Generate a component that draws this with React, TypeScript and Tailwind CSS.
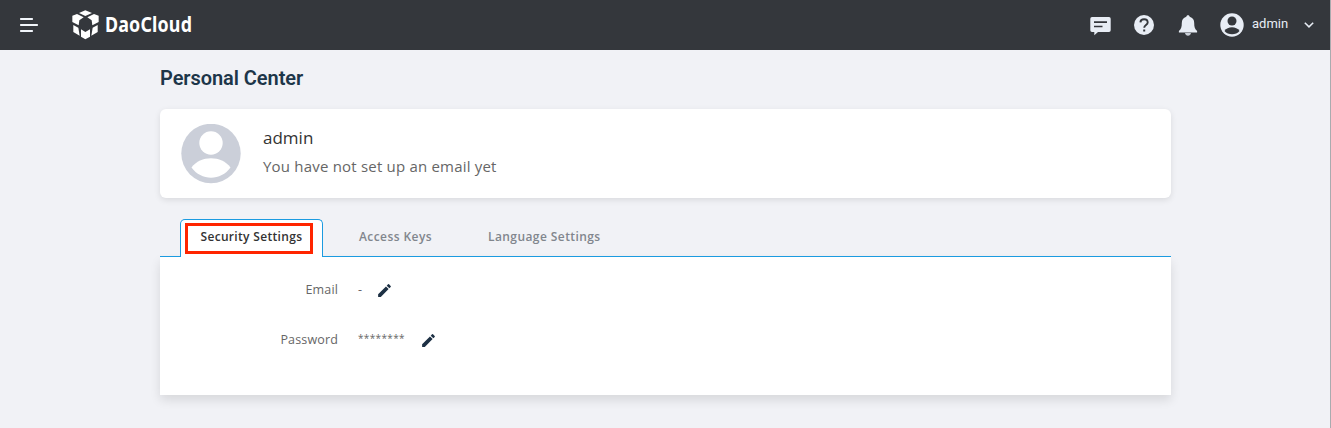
import React from 'react';
import { MdEdit } from 'react-icons/md';

function Logo() {
  return (
    <svg className="h-[30px] w-[27px] shrink-0" viewBox="0 0 81 90" fill="#fff">
      <path d="M40 1 60 9 40 18 21 9Z" />
      <path d="M15 12 35 22 22 31 20 46 1 36V17Z" />
      <path d="M66 12 46 22 59 31 61 46 80 36V17Z" />
      <path d="M4 45 19 53 23 77 4 66Z" />
      <path d="M77 45 62 53 58 77 77 66Z" />
      <path d="M27 58 40 66 54 58V80L40 88 27 80Z" />
    </svg>
  );
}

function Header() {
  return (
    <header className="flex h-[50px] items-center bg-[#34373c] text-[#e8edf5]">
      <svg className="ml-5 h-[14px] w-[18px]" viewBox="0 0 18 14" fill="#f1f5fa">
        <rect width="13" height="2" rx=".7" />
        <rect y="6" width="18" height="2" rx=".7" />
        <rect y="12" width="13" height="2" rx=".7" />
      </svg>
      <div className="ml-[34px] flex w-[150px] items-center">
        <Logo />
        <span className="ml-[5.500px] -mt-[3px] origin-left scale-x-[.85] font-['Noto_Sans',sans-serif] text-[21px] leading-[30px] font-bold tracking-[.2px] text-white">
          DaoCloud
        </span>
      </div>
      <div className="ml-auto flex items-center">
        <svg className="mt-[2px] h-[20px] w-[21px]" viewBox="0 0 21 20">
          <path fill="#e8edf5" d="M2 1h17a1.7 1.7 0 0 1 1.700 1.700v11.600A1.700 1.700 0 0 1 19 16H8l-3.700 3.200V16H2A1.700 1.700 0 0 1 .3 14.300V2.700A1.700 1.700 0 0 1 2 1Z" />
          <path d="M4 6.100h13M4 10.500h8.500" stroke="#34373c" strokeWidth="1.600" />
        </svg>
        <svg className="ml-[21px] h-[24px] w-[24px]" viewBox="0 0 24 24">
          <circle cx="12" cy="12" r="10" fill="#e8edf5" />
          <path d="M8.400 9.400c.2-4.300 7.300-4.300 7.300.1 0 2.400-3.500 2.800-3.500 5.300" fill="none" stroke="#34373c" strokeWidth="1.900" />
          <rect x="11.200" y="16.500" width="2" height="2" fill="#34373c" />
        </svg>
        <svg className="mt-[1px] ml-[21.500px] h-[22px] w-[20px]" viewBox="0 0 20 22">
          <path fill="#e8edf5" d="M10 .3c1 0 1.600.6 1.700 1.500 3 .8 4.500 3.200 4.500 6.200 0 4 .6 6.200 2.900 8.100V17.400H.9v-1.300C3.200 14.200 3.800 12 3.800 8c0-3 1.500-5.400 4.500-6.200C8.400.9 9 .3 10 .3Z" />
          <path fill="#c9cfd8" d="M7 18h6c-.4 1.700-1.500 2.700-3 2.700s-2.600-1-3-2.700Z" />
        </svg>
        <svg className="ml-[22.500px] h-[24px] w-[24px]" viewBox="0 0 24 24">
          <circle cx="12" cy="12" r="11.700" fill="#e8edf5" />
          <circle cx="12" cy="8" r="4.500" fill="#34373c" />
          <path d="M4.500 18c3-4.900 12-4.900 15 0-3.500 4.300-11.500 4.300-15 0Z" fill="#34373c" />
        </svg>
        <span className="ml-[8px] -mt-[2px] w-[36px] font-[Roboto,sans-serif] text-[13px]">admin</span>
        <svg className="mr-[16px] ml-[16px] h-[6px] w-[10px]" viewBox="0 0 10 6" fill="none" stroke="#e8edf5" strokeWidth="1.500">
          <path d="m.8.700 4.200 4.200L9.200.700" />
        </svg>
      </div>
    </header>
  );
}

function Avatar() {
  return (
    <svg className="h-[60px] w-[60px]" viewBox="0 0 60 60">
      <circle cx="30" cy="29.500" r="29.700" fill="#cbcfd9" />
      <circle cx="30" cy="19" r="11.700" fill="#fff" />
      <path d="M10.500 43.500c9-12.300 30-12.300 39 0-9.500 13.500-29.500 13.500-39 0Z" fill="#fff" />
    </svg>
  );
}

export default function App() {
  return (
    <div className="h-[428px] overflow-hidden border-r border-[#a9abaf] bg-[#f1f2f6] font-['Open_Sans',sans-serif]">
      <Header />
      <main className="ml-[160px] w-[1011px]">
        <h1 className="pt-[14px] font-[Roboto,sans-serif] text-[20px] leading-[28px] font-semibold tracking-[-.06px] text-[#1d3649]">
          <span>Personal Center</span>
        </h1>
        <section className="mt-[17px] flex h-[89px] rounded-[6px] bg-white pt-[15px] pl-[21px] shadow-[0_2px_6px_rgba(0,0,0,0.1)]">
          <Avatar />
          <div className="ml-[22px] pt-[2px]">
            <p className="text-[17px] leading-[24px] text-[#333]"><span>admin</span></p>
            <p className="mt-[3px] text-[15px] leading-[26px] tracking-[.2px] text-[#666]"><span>You have not set up an email yet</span></p>
          </div>
        </section>
        <nav className="mt-[21px] flex h-[38px] text-[12px] font-semibold">
          <div className="w-[20px] border-b border-[#1b9be0]" />
          <div className="h-[38px] w-[143px] rounded-t-[5px] border border-b-0 border-[#1b9be0] bg-white pt-[3px] pl-[4px]">
            <div className="flex h-[31px] w-[128px] items-center border-[3px] border-[#ff2500] pb-[3px] pl-[12.500px] tracking-[.32px] whitespace-nowrap text-[#333]">
              <span>Security Settings</span>
            </div>
          </div>
          <div className="flex flex-1 items-center border-b border-[#1b9be0] pb-[1px] pl-[36px] tracking-[.42px] text-[#81868d]">
            <span className="w-[129px]"><span>Access Keys</span></span>
            <span>Language Settings</span>
          </div>
        </nav>
        <section className="h-[138px] bg-white pt-[20px] text-[12.5px] tracking-[.15px] text-[#666] shadow-[0_5px_10px_rgba(0,0,0,0.11)]">
          <div className="flex h-[26px] items-center">
            <span className="w-[178px] text-right"><span>Email</span></span>
            <span className="ml-[20px] w-[18px]">-</span>
            <MdEdit className="h-[17px] w-[17px] text-[#1d3044]" />
          </div>
          <div className="mt-[24px] flex h-[26px] items-center">
            <span className="w-[178px] text-right"><span>Password</span></span>
            <span className="-mt-[3px] ml-[20px] w-[62px]"><span className="text-[10px] tracking-[.35px]">********</span></span>
            <MdEdit className="h-[17px] w-[17px] text-[#1d3044]" />
          </div>
        </section>
      </main>
    </div>
  );
}
